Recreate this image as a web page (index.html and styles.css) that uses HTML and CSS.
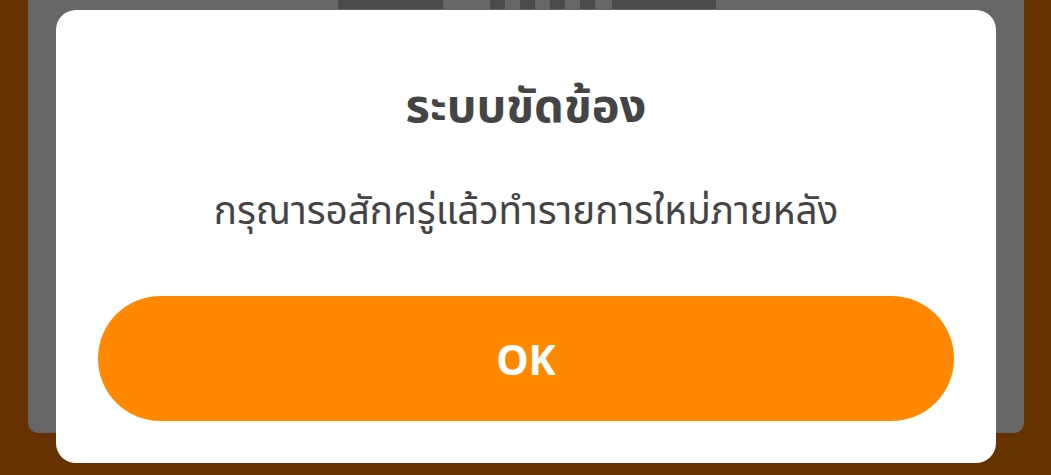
FILE: index.html
```html
<!DOCTYPE html>
<html lang="th">
<head>
  <meta charset="UTF-8">
  <meta name="viewport" content="width=device-width, initial-scale=1.0">
  <title>ระบบขัดข้อง</title>
  <link rel="stylesheet" href="styles.css">
</head>
<body>
  <div class="screen">
    <div class="tabs">
      <div class="tab"></div>
      <div class="stripes">
        <span></span><span></span><span></span><span></span>
      </div>
      <div class="tab tab-right"></div>
    </div>
  </div>

  <div class="dialog">
    <h1 class="dialog-title">ระบบขัดข้อง</h1>
    <p class="dialog-text">กรุณารอสักครู่แล้วทำรายการใหม่ภายหลัง</p>
    <button class="dialog-btn">OK</button>
  </div>
</body>
</html>
```

FILE: styles.css
```css
body {
  margin: 0;
  background: #663300;
  font-family: "Noto Sans Thai", "Noto Sans", sans-serif;
}
.screen {
  height: 433px;
  margin: 0 27px 0 28px;
  background: #666666;
  border-radius: 0 0 10px 10px;
}
.tabs {
  display: flex;
  padding-left: 310px;
  height: 9px;
}
.tab {
  width: 105px;
  background: #4a4a4a;
}
.stripes {
  display: flex;
  gap: 15px;
  margin-left: 47px;
  width: 122px;
}
.stripes span {
  width: 15px;
  background: #4a4a4a;
}
.tab-right {
  width: 104px;
}
.dialog {
  position: absolute;
  top: 10px;
  left: 56px;
  width: 940px;
  height: 453px;
  box-sizing: border-box;
  background: #ffffff;
  border-radius: 20px;
  padding: 73px 42px 42px;
  display: flex;
  flex-direction: column;
  align-items: center;
}
.dialog-title {
  margin: 0;
  font-size: 47px;
  line-height: 50px;
  font-weight: bold;
  color: #444444;
}
.dialog-text {
  margin: 59px 0 0;
  font-size: 38.7px;
  line-height: 40px;
  color: #444444;
}
.dialog-btn {
  margin-top: 64px;
  width: 100%;
  height: 125px;
  border: none;
  border-radius: 63px;
  background: #ff8800;
  color: #ffffff;
  font-family: "Noto Sans", sans-serif;
  font-size: 41px;
  font-weight: bold;
}
```
